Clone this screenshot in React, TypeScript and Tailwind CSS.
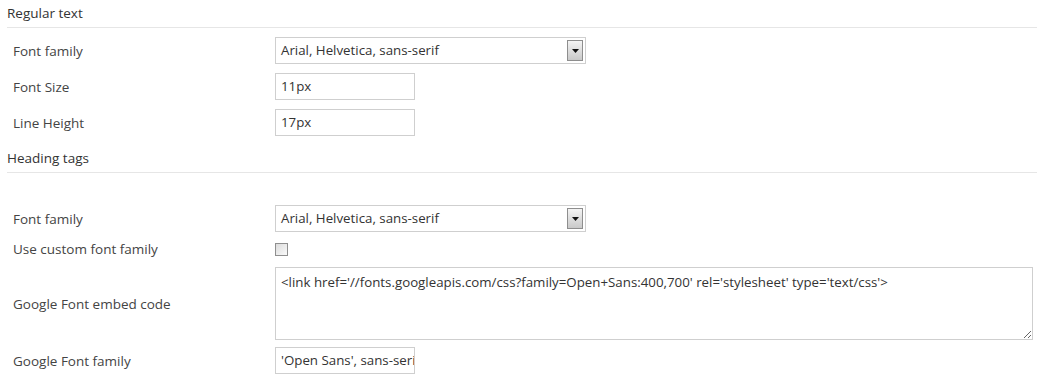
import React from 'react';

const font = { fontFamily: '"Open Sans", "Liberation Sans", Arial, sans-serif' };

const SectionTitle: React.FC<{ title: string }> = ({ title }) => (
  <div className="mx-[7px] h-[28px] border-b border-[#e6e6e6] pt-[4px] text-[13.5px] leading-[18px] text-[#333]">
    {title}
  </div>
);

const Row: React.FC<{ label: string; children: React.ReactNode }> = ({ label, children }) => (
  <div className="flex items-center">
    <div className="w-[275px] shrink-0 pl-[13px] text-[13.5px] leading-[20px] text-[#444]">{label}</div>
    {children}
  </div>
);

const SelectBox: React.FC<{ value: string }> = ({ value }) => (
  <div className="flex h-[27px] w-[311px] items-center border border-[#cfcfcf] bg-white pl-[5px] pr-[2px]">
    <span className="flex-1 text-[13.3px] text-[#333]">{value}</span>
    <div className="flex h-[21px] w-[16px] items-center justify-center border border-[#8e8e8e] bg-gradient-to-b from-[#f4f4f4] to-[#c9c9c9]">
      <svg width="7" height="4" viewBox="0 0 7 4">
        <path d="M0 0h7L3.5 4z" fill="#111" />
      </svg>
    </div>
  </div>
);

const TextBox: React.FC<{ value: string }> = ({ value }) => (
  <div className="flex h-[27px] w-[140px] items-center overflow-hidden whitespace-nowrap border border-[#cfcfcf] bg-white pl-[5px] text-[13.3px] text-[#333]">
    {value}
  </div>
);

export default function App() {
  return (
    <div className="h-[378px] w-[1044px] overflow-hidden bg-white" style={font}>
      <SectionTitle title="Regular text" />
      <div className="mt-[9px] flex flex-col gap-[9px]">
        <Row label="Font family">
          <SelectBox value="Arial, Helvetica, sans-serif" />
        </Row>
        <Row label="Font Size">
          <TextBox value="11px" />
        </Row>
        <Row label="Line Height">
          <TextBox value="17px" />
        </Row>
      </div>
      <div className="mt-[9px]">
        <SectionTitle title="Heading tags" />
      </div>
      <div className="mt-[32px] flex flex-col">
        <Row label="Font family">
          <SelectBox value="Arial, Helvetica, sans-serif" />
        </Row>
        <div className="mt-[7px]">
          <Row label="Use custom font family">
            <div className="h-[13px] w-[13px] border border-[#8f8f8f] bg-gradient-to-br from-[#dcdcdc] to-[#fafafa]" />
          </Row>
        </div>
        <div className="mt-[8px]">
          <Row label="Google Font embed code">
            <textarea
              readOnly
              className="block h-[73px] w-[758px] resize border border-[#cfcfcf] bg-white px-[5px] pt-[5px] text-[13.3px] leading-[18px] text-[#333] outline-none"
              style={font}
              value="<link href='//fonts.googleapis.com/css?family=Open+Sans:400,700' rel='stylesheet' type='text/css'>"
            />
          </Row>
        </div>
        <div className="mt-[7px]">
          <Row label="Google Font family">
            <TextBox value="'Open Sans', sans-serif" />
          </Row>
        </div>
      </div>
    </div>
  );
}
